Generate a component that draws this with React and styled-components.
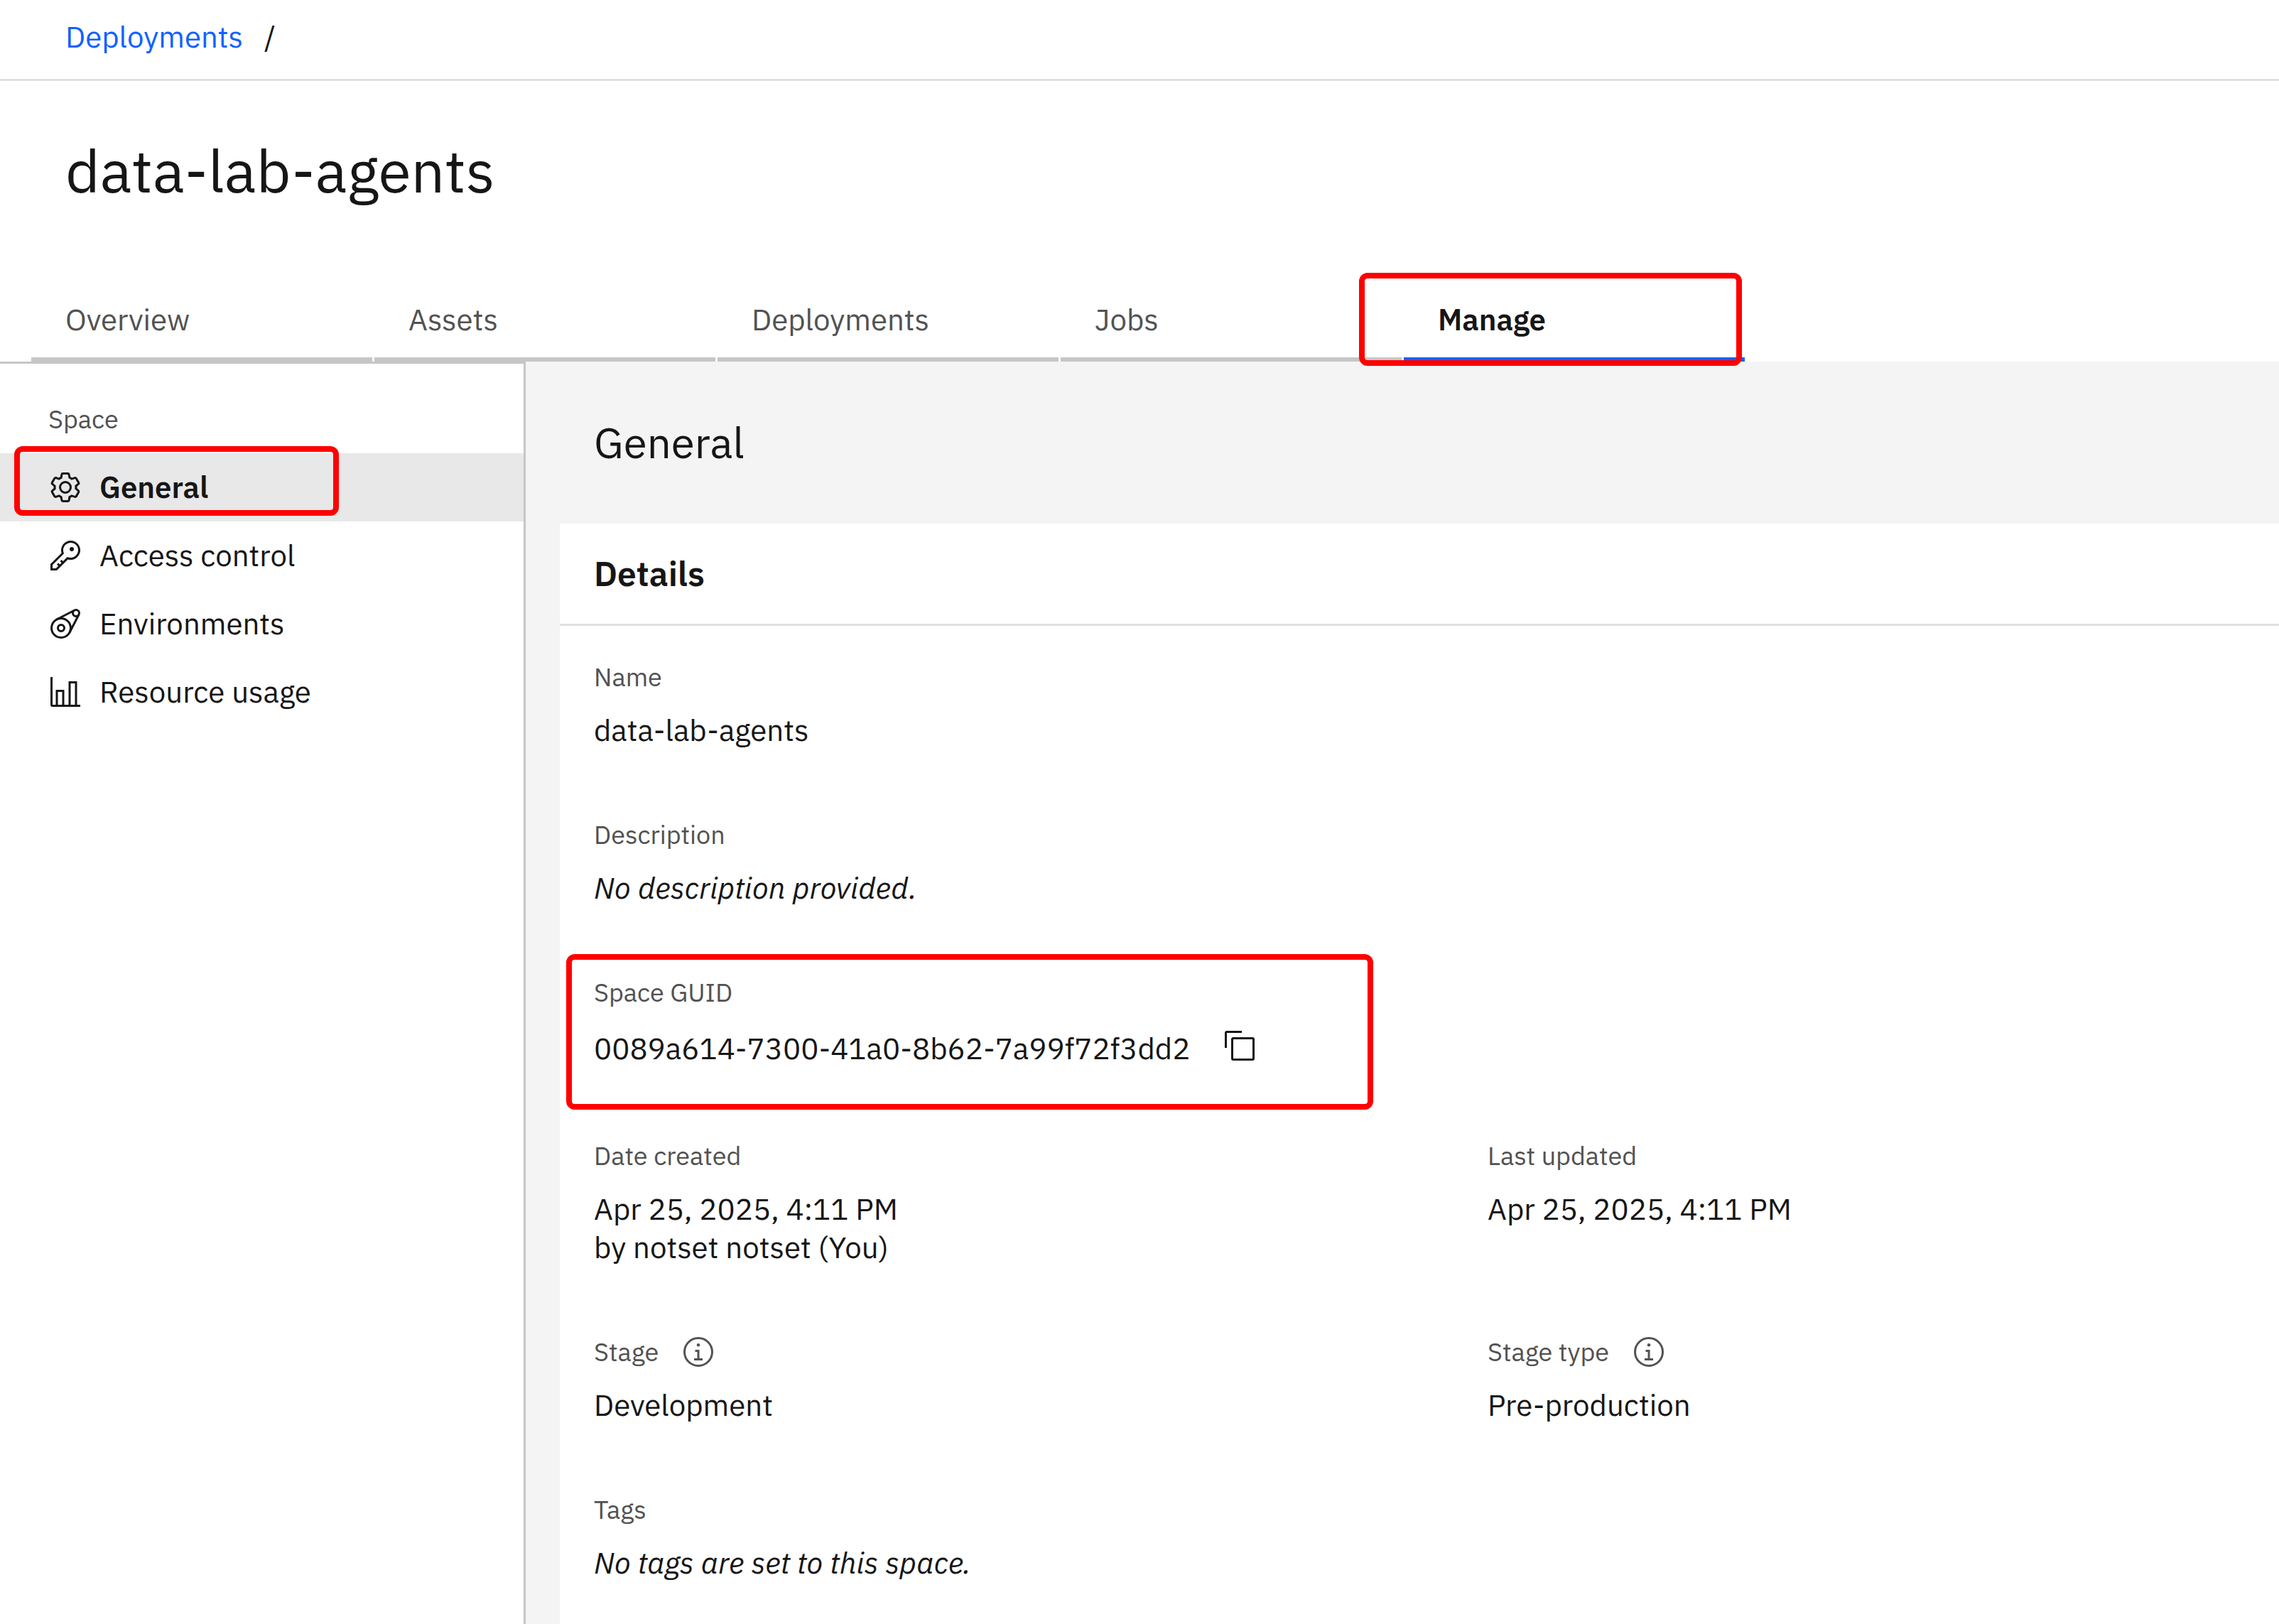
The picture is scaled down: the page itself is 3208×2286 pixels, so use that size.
import React from "react";
import styled, { createGlobalStyle, css } from "styled-components";

const color = {
  text: "#161616",
  muted: "#525252",
  link: "#0f62fe",
  layer: "#f4f4f4",
  selected: "#e8e8e8",
  subtle: "#e0e0e0",
  strong: "#c6c6c6",
  callout: "#ff0000",
};

const GlobalStyle = createGlobalStyle`
  *, *::before, *::after { box-sizing: border-box; }
  body {
    margin: 0;
    background: #ffffff;
    color: ${color.text};
    font: 400 42px/54px "IBM Plex Sans", "Open Sans", "Noto Sans", sans-serif;
  }
  h1, h2, h3, p, ul, dl, dd { margin: 0; padding: 0; }
  ul { list-style: none; }
  a { color: inherit; text-decoration: none; }
  button { border: 0; padding: 0; background: none; color: inherit; font: inherit; cursor: pointer; }
`;

const Page = styled.div`
  display: flex;
  flex-direction: column;
  min-height: 100vh;
`;

const Breadcrumb = styled.nav`
  display: flex;
  gap: 30px;
  padding: 25px 92px 32px;
  border-bottom: 3px solid ${color.subtle};
`;

const BreadcrumbLink = styled.a`
  color: ${color.link};
`;

const PageTitle = styled.h1`
  padding: 72px 92px 96px;
  font-size: 84px;
  font-weight: 400;
  line-height: 108px;
`;

const TabList = styled.div`
  display: flex;
  gap: 3px;
  padding-left: 44px;
`;

const Tab = styled.button`
  position: relative;
  flex: 0 1 480px;
  height: 119px;
  padding: 0 48px;
  text-align: left;
  color: ${(p) => (p.$active ? color.text : color.muted)};
  font-weight: ${(p) => (p.$active ? 600 : 400)};
  box-shadow: inset 0 -6px 0 ${(p) => (p.$active ? color.link : color.strong)};
`;

/* Hand-placed highlight drawn over the element it belongs to. */
const Callout = styled.span`
  position: absolute;
  inset: ${(p) => p.$inset};
  z-index: 1;
  border: 8px solid ${color.callout};
  border-radius: 12px;
  pointer-events: none;
`;

const Body = styled.div`
  display: flex;
  flex: 1;
`;

const Sidebar = styled.nav`
  flex: 0 0 740px;
  padding-top: 54px;
  border-top: 3px solid ${color.strong};
  border-right: 3px solid ${color.strong};
`;

const labelText = css`
  color: ${color.muted};
  font-size: 36px;
  line-height: 48px;
`;

const SidebarHeading = styled.p`
  ${labelText}
  padding: 0 68px 24px;
`;

const SidebarItem = styled.li`
  position: relative;
`;

const SidebarLink = styled.a`
  display: flex;
  align-items: center;
  gap: 24px;
  height: 96px;
  padding: 0 68px;
  background: ${(p) => (p.$active ? color.selected : "transparent")};
  font-weight: ${(p) => (p.$active ? 600 : 400)};
`;

const Main = styled.main`
  display: flex;
  flex: 1;
  flex-direction: column;
  min-width: 0;
  padding-left: 48px;
  background: ${color.layer};
`;

const SectionTitle = styled.h2`
  padding: 72px 48px;
  font-size: 60px;
  font-weight: 400;
  line-height: 84px;
`;

const Card = styled.section`
  flex: 1;
  background: #ffffff;
`;

const CardTitle = styled.h3`
  padding: 39px 48px;
  border-bottom: 3px solid ${color.subtle};
  font-size: 48px;
  font-weight: 600;
  line-height: 63px;
`;

const Fields = styled.dl`
  display: grid;
  grid-template-columns: 1fr 1fr;
  gap: 96px 144px;
  padding: 48px 0 48px 48px;
`;

const Field = styled.div`
  position: relative;
  grid-column: ${(p) => (p.$start ? "1" : "auto")};
`;

const FieldLabel = styled.dt`
  ${labelText}
  display: flex;
  gap: 32px;
  margin-bottom: 24px;
`;

const FieldValue = styled.dd`
  font-style: ${(p) => (p.$empty ? "italic" : "normal")};
`;

const CopyRow = styled.dd`
  display: flex;
  gap: 46px;
  height: 62px;
  line-height: 62px;
`;

const IconButton = styled.button`
  display: flex;
  align-items: center;
  height: ${(p) => p.$height}px;
`;

const Icon = styled.svg.attrs({ viewBox: "0 0 32 32", "aria-hidden": true })`
  flex: none;
  width: 48px;
  height: 48px;
  fill: currentColor;
`;

const SettingsIcon = () => (
  <Icon>
    <path d="M27,16.76c0-.25,0-.5,0-.76s0-.51,0-.77l1.92-1.68A2,2,0,0,0,29.3,11L26.94,7a2,2,0,0,0-1.73-1,2,2,0,0,0-.64.1l-2.43.82a11.35,11.35,0,0,0-1.31-.75l-.51-2.52a2,2,0,0,0-2-1.61H13.64a2,2,0,0,0-2,1.61l-.51,2.52a11.48,11.48,0,0,0-1.32.75L7.43,6.06A2,2,0,0,0,6.79,6,2,2,0,0,0,5.06,7L2.7,11a2,2,0,0,0,.41,2.51L5,15.24c0,.25,0,.5,0,.76s0,.51,0,.77L3.11,18.45A2,2,0,0,0,2.7,21L5.06,25a2,2,0,0,0,1.73,1,2,2,0,0,0,.64-.1l2.43-.82a11.35,11.35,0,0,0,1.31.75l.51,2.52a2,2,0,0,0,2,1.61h4.72a2,2,0,0,0,2-1.61l.51-2.52a11.48,11.48,0,0,0,1.32-.75l2.42.82a2,2,0,0,0,.64.1,2,2,0,0,0,1.73-1L29.3,21a2,2,0,0,0-.41-2.51ZM25.21,24l-3.43-1.16a8.86,8.86,0,0,1-2.71,1.57L18.36,28H13.64l-.71-3.55a9.36,9.36,0,0,1-2.7-1.57L6.79,24,4.43,20l2.72-2.4a8.9,8.9,0,0,1,0-3.13L4.43,12,6.79,8l3.43,1.16a8.86,8.86,0,0,1,2.71-1.57L13.64,4h4.72l.71,3.55a9.36,9.36,0,0,1,2.7,1.57L25.21,8,27.57,12l-2.72,2.4a8.9,8.9,0,0,1,0,3.13L27.57,20Z" />
    <circle cx="16" cy="16" r="5" fill="none" stroke="currentColor" strokeWidth="2" />
  </Icon>
);

const KeyIcon = () => (
  <Icon>
    <path d="M21,2a9,9,0,0,0-8.6119,11.6118L2,24v6H8L18.3881,19.6118A9,9,0,1,0,21,2Zm0,16a7.0125,7.0125,0,0,1-2.0322-.3022L17.821,17.35l-.8472.8472-3.1811,3.1812L12.4141,20,11,21.4141l1.3787,1.3786-1.5859,1.586L9.4141,23,8,24.4141l1.3787,1.3786L7.1716,28H4V24.8284l9.8023-9.8023.8472-.8474-.3473-1.1467A7,7,0,1,1,21,18Z" />
    <circle cx="22" cy="10" r="2" />
  </Icon>
);

const BeltIcon = () => (
  <Icon>
    <g fill="none" stroke="currentColor" strokeWidth="2">
      <circle cx="12" cy="20" r="9" />
      <circle cx="12" cy="20" r="3" />
      <circle cx="26" cy="6" r="3" />
      <path d="M7.86 12.01 24.62 3.34M19.99 24.14 28.66 7.38" />
    </g>
  </Icon>
);

const ChartIcon = () => (
  <Icon>
    <path d="M27,28V6H19V28H15V14H7V28H4V2H2V28a2,2,0,0,0,2,2H30V28ZM13,28H9V16h4Zm12,0H21V8h4Z" />
  </Icon>
);

const CopyIcon = () => (
  <Icon>
    <path d="M28,10V28H10V10H28m0-2H10a2,2,0,0,0-2,2V28a2,2,0,0,0,2,2H28a2,2,0,0,0,2-2V10a2,2,0,0,0-2-2Z" />
    <path d="M4,18H2V4A2,2,0,0,1,4,2H18V4H4Z" />
  </Icon>
);

const InfoIcon = () => (
  <Icon>
    <circle cx="16" cy="16" r="13" fill="none" stroke="currentColor" strokeWidth="2" />
    <path d="M17 22V14H13V16H15V22H12V24H20V22Z" />
    <circle cx="16" cy="9.5" r="1.5" />
  </Icon>
);

const tabs = ["Overview", "Assets", "Deployments", "Jobs", "Manage"];
const activeTab = "Manage";

const sections = [
  { name: "General", Glyph: SettingsIcon, active: true },
  { name: "Access control", Glyph: KeyIcon },
  { name: "Environments", Glyph: BeltIcon },
  { name: "Resource usage", Glyph: ChartIcon },
];

export default function App() {
  return (
    <Page>
      <GlobalStyle />
      <Breadcrumb aria-label="Breadcrumb">
        <BreadcrumbLink href="#deployments">Deployments</BreadcrumbLink>
        <span>/</span>
      </Breadcrumb>

      <PageTitle>data-lab-agents</PageTitle>

      <TabList role="tablist">
        {tabs.map((name) => (
          <Tab key={name} type="button" role="tab" aria-selected={name === activeTab} $active={name === activeTab}>
            {name}
            {name === activeTab && <Callout $inset="-6px 4px -6px -63px" />}
          </Tab>
        ))}
      </TabList>

      <Body>
        <Sidebar aria-label="Space">
          <SidebarHeading>Space</SidebarHeading>
          <ul>
            {sections.map(({ name, Glyph, active }) => (
              <SidebarItem key={name}>
                <SidebarLink href="#" $active={active} aria-current={active ? "page" : undefined}>
                  <Glyph />
                  {name}
                </SidebarLink>
                {active && <Callout $inset="-10px 260px 8px 20px" />}
              </SidebarItem>
            ))}
          </ul>
        </Sidebar>

        <Main>
          <SectionTitle>General</SectionTitle>
          <Card>
            <CardTitle>Details</CardTitle>
            <Fields>
              <Field $start>
                <FieldLabel>Name</FieldLabel>
                <FieldValue>data-lab-agents</FieldValue>
              </Field>
              <Field $start>
                <FieldLabel>Description</FieldLabel>
                <FieldValue $empty>No description provided.</FieldValue>
              </Field>
              <Field $start>
                <FieldLabel>Space GUID</FieldLabel>
                <CopyRow>
                  0089a614-7300-41a0-8b62-7a99f72f3dd2
                  <IconButton type="button" aria-label="Copy" $height={54}>
                    <CopyIcon />
                  </IconButton>
                </CopyRow>
                <Callout $inset="-30px 17px -55px -39px" />
              </Field>
              <Field $start>
                <FieldLabel>Date created</FieldLabel>
                <FieldValue>
                  Apr 25, 2025, 4:11 PM
                  <br />
                  by notset notset (You)
                </FieldValue>
              </Field>
              <Field>
                <FieldLabel>Last updated</FieldLabel>
                <FieldValue>Apr 25, 2025, 4:11 PM</FieldValue>
              </Field>
              <Field $start>
                <FieldLabel>
                  Stage
                  <IconButton type="button" aria-label="About stage" $height={48}>
                    <InfoIcon />
                  </IconButton>
                </FieldLabel>
                <FieldValue>Development</FieldValue>
              </Field>
              <Field>
                <FieldLabel>
                  Stage type
                  <IconButton type="button" aria-label="About stage type" $height={48}>
                    <InfoIcon />
                  </IconButton>
                </FieldLabel>
                <FieldValue>Pre-production</FieldValue>
              </Field>
              <Field $start>
                <FieldLabel>Tags</FieldLabel>
                <FieldValue $empty>No tags are set to this space.</FieldValue>
              </Field>
            </Fields>
          </Card>
        </Main>
      </Body>
    </Page>
  );
}
